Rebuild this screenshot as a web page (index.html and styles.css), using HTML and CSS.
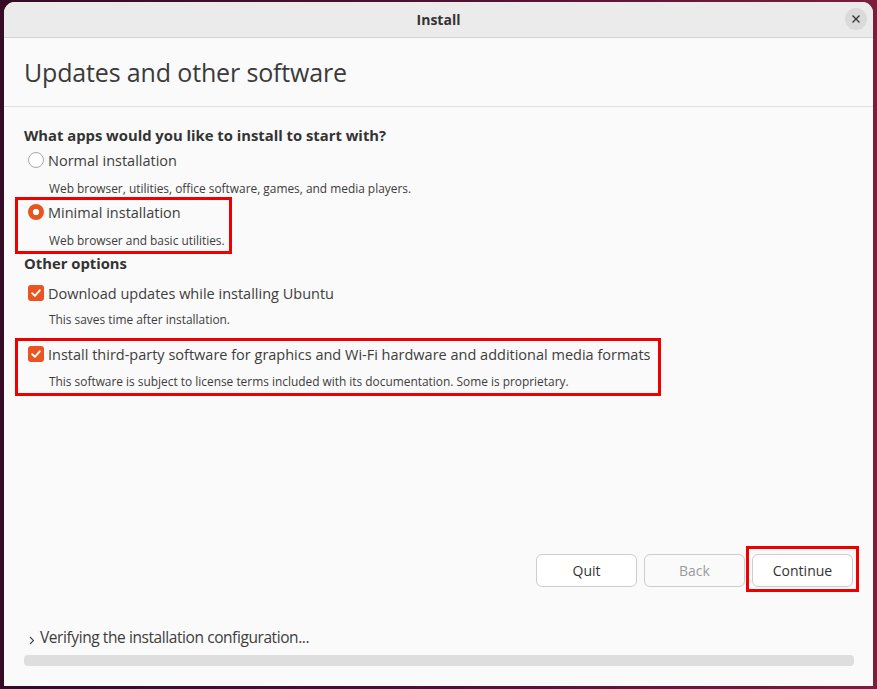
FILE: index.html
```html
<!DOCTYPE html>
<html>
<head>
<meta charset="utf-8">
<link rel="stylesheet" href="styles.css">
</head>
<body>
<div class="window">
  <div class="titlebar">
    <span class="title">Install</span>
    <span class="close"><svg width="10" height="10" viewBox="0 0 10 10"><path d="M1.5 1.5 L8.5 8.5 M8.5 1.5 L1.5 8.5" stroke="#333" stroke-width="1.3" fill="none"/></svg></span>
  </div>
  <div class="header"><h1>Updates and other software</h1></div>
  <div class="content">
    <div class="section-title q">What apps would you like to install to start with?</div>
    <div class="option o1">
      <div class="row"><span class="radio"></span><span class="label">Normal installation</span></div>
      <div class="desc d1">Web browser, utilities, office software, games, and media players.</div>
    </div>
    <div class="option o2 hl hl1">
      <div class="row"><span class="radio on"></span><span class="label">Minimal installation</span></div>
      <div class="desc d2">Web browser and basic utilities.</div>
    </div>
    <div class="section-title other">Other options</div>
    <div class="option o3">
      <div class="row"><span class="check"><svg width="12" height="12" viewBox="0 0 12 12"><path d="M2.2 6.2 L4.9 8.8 L9.8 3.3" stroke="#fff" stroke-width="1.9" fill="none" stroke-linecap="round" stroke-linejoin="round"/></svg></span><span class="label">Download updates while installing Ubuntu</span></div>
      <div class="desc d3">This saves time after installation.</div>
    </div>
    <div class="option o4 hl hl2">
      <div class="row"><span class="check"><svg width="12" height="12" viewBox="0 0 12 12"><path d="M2.2 6.2 L4.9 8.8 L9.8 3.3" stroke="#fff" stroke-width="1.9" fill="none" stroke-linecap="round" stroke-linejoin="round"/></svg></span><span class="label">Install third-party software for graphics and Wi-Fi hardware and additional media formats</span></div>
      <div class="desc d4">This software is subject to license terms included with its documentation. Some is proprietary.</div>
    </div>
  </div>
  <div class="buttons">
    <button class="btn">Quit</button>
    <button class="btn disabled">Back</button>
    <button class="btn hl hl3">Continue</button>
  </div>
  <div class="footer">
    <div class="status"><span class="chev"><svg width="6" height="9" viewBox="0 0 6 9"><path d="M1 1 L4.5 4.5 L1 8" stroke="#444" stroke-width="1.1" fill="none"/></svg></span><span class="status-text">Verifying the installation configuration...</span></div>
    <div class="progress"></div>
  </div>
</div>
</body>
</html>
```
FILE: styles.css
```css
* { box-sizing: border-box; }
html, body { margin: 0; padding: 0; }
body {
  width: 877px;
  height: 689px;
  overflow: hidden;
  background: linear-gradient(90deg, #350b26 0%, #4a1030 45%, #7a1e3c 100%);
  font-family: "Open Sans", "Noto Sans", sans-serif;
  color: #3d3d3d;
  padding: 2px 4px 3px 4px;
}
.window {
  width: 869px;
  height: 684px;
  background: #fafafa;
  border-radius: 11px 11px 0 0;
  display: flex;
  flex-direction: column;
  overflow: hidden;
}
.titlebar {
  height: 36px;
  flex: none;
  background: #ebebeb;
  border-bottom: 1px solid #d3d3d3;
  display: flex;
  align-items: center;
  justify-content: center;
  position: relative;
}
.title {
  font-weight: 700;
  font-size: 14px;
  color: #333;
}
.close {
  position: absolute;
  right: 6px;
  top: 6px;
  width: 22px;
  height: 22px;
  border-radius: 50%;
  background: #dadada;
  display: flex;
  align-items: center;
  justify-content: center;
}
.header {
  height: 69px;
  flex: none;
  border-bottom: 1px solid #e0e0e0;
  display: flex;
  align-items: center;
  padding-left: 20px;
}
.header h1 {
  margin: 0;
  font-weight: 400;
  font-size: 25px;
  color: #3a3a3a;
  letter-spacing: -0.15px;
}
.content {
  padding: 18px 20px 0 20px;
  display: flex;
  flex-direction: column;
  align-items: flex-start;
}
.section-title {
  font-weight: 700;
  font-size: 14.8px;
  line-height: 20px;
  color: #333;
}
.option { display: flex; flex-direction: column; }
.row {
  display: flex;
  align-items: center;
  height: 24px;
  padding-left: 4px;
}
.label {
  font-size: 14.5px;
  margin-left: 4px;
  color: #3d3d3d;
}
.desc {
  font-size: 11.9px;
  line-height: 18px;
  padding-left: 25px;
  color: #3d3d3d;
}
.radio {
  width: 16px;
  height: 16px;
  border-radius: 50%;
  border: 1px solid #a8a8a8;
  background: #fff;
  flex: none;
}
.radio.on {
  border: none;
  background: radial-gradient(circle, #fff 0 3px, #e95420 3.5px);
}
.check {
  width: 16px;
  height: 16px;
  border-radius: 3px;
  background: #e95420;
  flex: none;
  display: flex;
  align-items: center;
  justify-content: center;
}
.o1 { margin-top: 3px; }
.d1 { margin-top: 7px; }
.o2 { margin-top: 3px; }
.d2 { margin-top: 7px; }
.other { margin-top: 4px; }
.o3 { margin-top: 8px; }
.d3 { margin-top: 5px; }
.o4 { margin-top: 14px; }
.d4 { margin-top: 6px; }

.hl { position: relative; }
.hl::after {
  content: "";
  position: absolute;
  border: 3px solid #ee0000;
  pointer-events: none;
}
.hl1::after { left: -9px; top: -3px; right: -7px; bottom: -5px; }
.hl2::after { left: -9px; top: -4px; right: -11px; bottom: -6px; }
.hl3::after { left: -7px; top: -9px; right: -7px; bottom: -6px; }

.buttons {
  margin-top: auto;
  display: flex;
  justify-content: flex-end;
  gap: 7px;
  padding-right: 20px;
}
.btn {
  width: 101px;
  height: 33px;
  border: 1px solid #cdcdcd;
  border-radius: 6px;
  background: #fff;
  font-family: inherit;
  font-size: 14px;
  color: #333;
  padding: 0;
}
.btn.disabled { color: #9a9a9a; background: #fafafa; }
.footer {
  padding: 40px 19px 20px 20px;
}
.status {
  display: flex;
  align-items: center;
  height: 20px;
}
.chev { margin: 6px 5px 0 5px; display: flex; }
.status-text {
  font-size: 15.5px;
  letter-spacing: -0.42px;
  color: #3d3d3d;
}
.progress {
  margin-top: 8px;
  height: 11px;
  border-radius: 4px;
  background: #dedede;
}
```
